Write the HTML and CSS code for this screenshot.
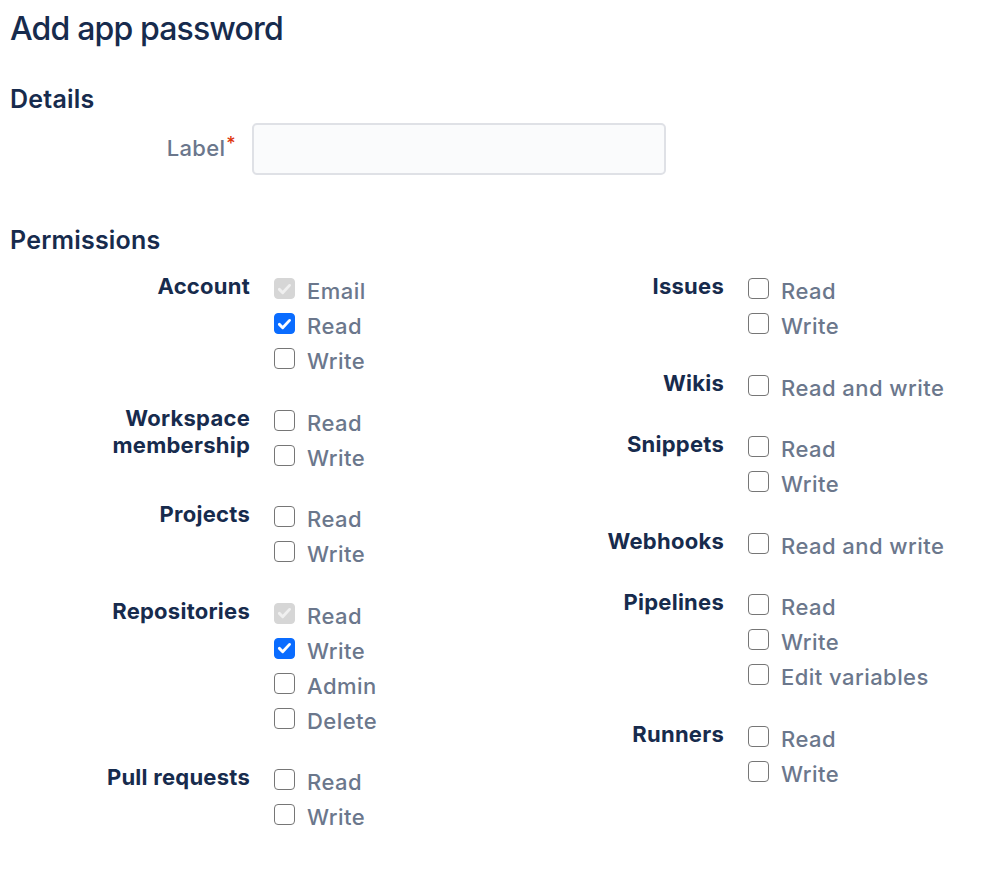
FILE: index.html
```html
<!DOCTYPE html>
<html lang="en">
<head>
<meta charset="utf-8">
<title>Add app password</title>
<link rel="stylesheet" href="styles.css">
</head>
<body>
<main class="page">
  <h1 class="title">Add app password</h1>

  <h2 class="section-title details-title">Details</h2>
  <div class="field-row">
    <label class="field-label" for="label-input">Label<span class="req">*</span></label>
    <input class="text-input" id="label-input" type="text">
  </div>

  <h2 class="section-title perm-title">Permissions</h2>
  <div class="perm-grid">
    <div class="perm-col">
      <div class="group">
        <div class="group-label">Account</div>
        <div class="options">
          <label class="opt"><span class="box disabled-checked"><svg viewBox="0 0 20 20"><path d="M4.6 10.4l3.5 3.5 7.2-7.7"/></svg></span><span class="opt-text">Email</span></label>
          <label class="opt"><span class="box checked"><svg viewBox="0 0 20 20"><path d="M4.6 10.4l3.5 3.5 7.2-7.7"/></svg></span><span class="opt-text">Read</span></label>
          <label class="opt"><span class="box"></span><span class="opt-text">Write</span></label>
        </div>
      </div>
      <div class="group">
        <div class="group-label">Workspace<br>membership</div>
        <div class="options">
          <label class="opt"><span class="box"></span><span class="opt-text">Read</span></label>
          <label class="opt"><span class="box"></span><span class="opt-text">Write</span></label>
        </div>
      </div>
      <div class="group">
        <div class="group-label">Projects</div>
        <div class="options">
          <label class="opt"><span class="box"></span><span class="opt-text">Read</span></label>
          <label class="opt"><span class="box"></span><span class="opt-text">Write</span></label>
        </div>
      </div>
      <div class="group">
        <div class="group-label">Repositories</div>
        <div class="options">
          <label class="opt"><span class="box disabled-checked"><svg viewBox="0 0 20 20"><path d="M4.6 10.4l3.5 3.5 7.2-7.7"/></svg></span><span class="opt-text">Read</span></label>
          <label class="opt"><span class="box checked"><svg viewBox="0 0 20 20"><path d="M4.6 10.4l3.5 3.5 7.2-7.7"/></svg></span><span class="opt-text">Write</span></label>
          <label class="opt"><span class="box"></span><span class="opt-text">Admin</span></label>
          <label class="opt"><span class="box"></span><span class="opt-text">Delete</span></label>
        </div>
      </div>
      <div class="group">
        <div class="group-label">Pull requests</div>
        <div class="options">
          <label class="opt"><span class="box"></span><span class="opt-text">Read</span></label>
          <label class="opt"><span class="box"></span><span class="opt-text">Write</span></label>
        </div>
      </div>
    </div>

    <div class="perm-col">
      <div class="group">
        <div class="group-label">Issues</div>
        <div class="options">
          <label class="opt"><span class="box"></span><span class="opt-text">Read</span></label>
          <label class="opt"><span class="box"></span><span class="opt-text">Write</span></label>
        </div>
      </div>
      <div class="group">
        <div class="group-label">Wikis</div>
        <div class="options">
          <label class="opt"><span class="box"></span><span class="opt-text">Read and write</span></label>
        </div>
      </div>
      <div class="group">
        <div class="group-label">Snippets</div>
        <div class="options">
          <label class="opt"><span class="box"></span><span class="opt-text">Read</span></label>
          <label class="opt"><span class="box"></span><span class="opt-text">Write</span></label>
        </div>
      </div>
      <div class="group">
        <div class="group-label">Webhooks</div>
        <div class="options">
          <label class="opt"><span class="box"></span><span class="opt-text">Read and write</span></label>
        </div>
      </div>
      <div class="group">
        <div class="group-label">Pipelines</div>
        <div class="options">
          <label class="opt"><span class="box"></span><span class="opt-text">Read</span></label>
          <label class="opt"><span class="box"></span><span class="opt-text">Write</span></label>
          <label class="opt"><span class="box"></span><span class="opt-text">Edit variables</span></label>
        </div>
      </div>
      <div class="group">
        <div class="group-label">Runners</div>
        <div class="options">
          <label class="opt"><span class="box"></span><span class="opt-text">Read</span></label>
          <label class="opt"><span class="box"></span><span class="opt-text">Write</span></label>
        </div>
      </div>
    </div>
  </div>
</main>
</body>
</html>
```

FILE: styles.css
```css
* { box-sizing: border-box; }

html, body {
  margin: 0;
  padding: 0;
  background: #ffffff;
}

body {
  font-family: Inter, "Noto Sans", "Liberation Sans", sans-serif;
  color: #172b4d;
}

.page {
  padding: 0 10px;
}

.title {
  margin: 0;
  padding-top: 9px;
  font-size: 32px;
  line-height: 40px;
  font-weight: 550;
  letter-spacing: -0.85px;
  color: #172b4d;
}

.section-title {
  margin: 0;
  font-size: 25px;
  line-height: 30px;
  font-weight: 600;
  letter-spacing: 0.2px;
  color: #172b4d;
}

.details-title {
  margin-top: 35px;
}

.field-row {
  display: flex;
  align-items: center;
  margin-top: 9px;
}

.field-label {
  width: 226px;
  text-align: right;
  font-size: 22px;
  font-weight: 500;
  letter-spacing: 0.3px;
  color: #6b778c;
  margin-right: 16px;
  padding-bottom: 4px;
}

.req {
  color: #de350b;
  font-size: 18px;
  vertical-align: 6px;
  margin-left: 1px;
}

.text-input {
  width: 414px;
  height: 52px;
  border: 2px solid #dfe1e6;
  border-radius: 5px;
  background: #fafbfc;
  font: inherit;
  outline: none;
}

.perm-title {
  margin-top: 50px;
}

.perm-grid {
  display: grid;
  grid-template-columns: 474px 1fr;
  margin-top: 16px;
}

.perm-col {
  display: flex;
  flex-direction: column;
  gap: 26.5px;
}

.group {
  display: flex;
  align-items: flex-start;
}

.group-label {
  width: 240px;
  text-align: right;
  font-size: 22px;
  line-height: 27px;
  font-weight: 650;
  letter-spacing: 0.25px;
  color: #172b4d;
  padding-top: 2px;
  margin-right: 24px;
}

.options {
  display: flex;
  flex-direction: column;
}

.opt {
  display: flex;
  align-items: center;
  height: 35px;
  font-size: 22px;
  font-weight: 500;
  letter-spacing: 0.45px;
  color: #6b778c;
}

.opt-text {
  padding-top: 5px;
}

.box {
  width: 21px;
  height: 21px;
  border: 1.5px solid #767676;
  border-radius: 4px;
  background: #ffffff;
  margin-right: 12px;
  display: flex;
  align-items: center;
  justify-content: center;
  flex: none;
}

.box svg {
  width: 20px;
  height: 20px;
  fill: none;
  stroke: #ffffff;
  stroke-width: 3;
  stroke-linecap: round;
  stroke-linejoin: round;
}

.box.checked {
  background: #0a6cff;
  border-color: #0a6cff;
}

.box.disabled-checked {
  background: #d6d6d6;
  border-color: #d6d6d6;
}

.box.disabled-checked svg {
  stroke: #f0f0f0;
}
```
